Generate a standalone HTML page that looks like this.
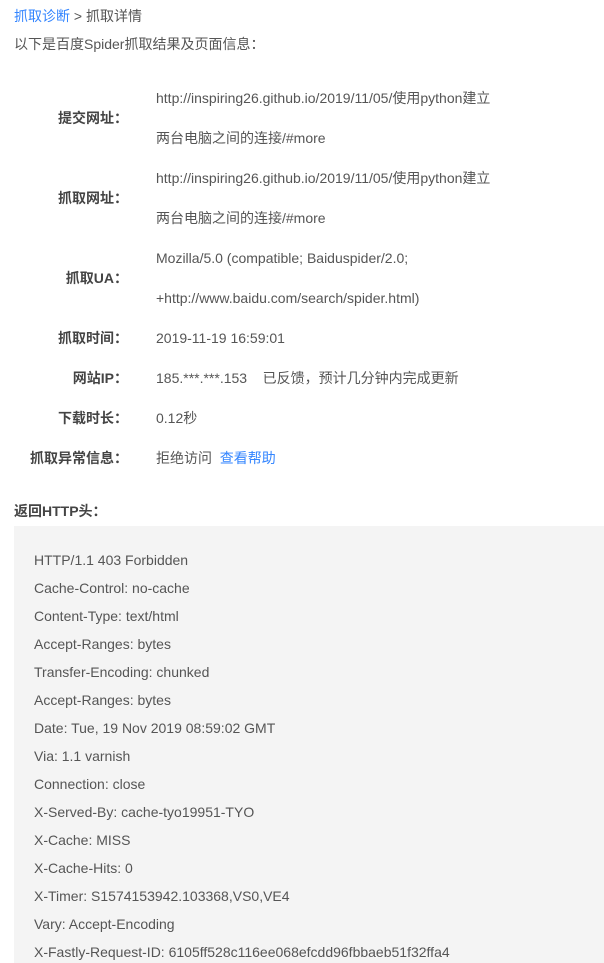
<html><head><style>
body{margin:0;background:#fff;font-family:"Liberation Sans","WenQuanYi Zen Hei","Noto Sans CJK SC",sans-serif;font-size:14px;color:#555;}
.a{position:absolute;white-space:nowrap;line-height:20px}
.l{position:absolute;width:128px;left:0;text-align:right;font-weight:bold;color:#444;line-height:20px}
.v{position:absolute;left:156px;line-height:40px;white-space:nowrap}
a{color:#3385ff;text-decoration:none}
.box{position:absolute;left:14px;top:526px;width:590px;height:437px;background:#f4f4f4}
.box div{position:absolute;left:20px;line-height:20px;white-space:nowrap}
</style></head><body>
<div class="a" style="left:14px;top:6px"><a>抓取诊断</a> &gt; 抓取详情</div>
<div class="a" style="left:14px;top:34px">以下是百度Spider抓取结果及页面信息：</div>
<div class="l" style="top:108px">提交网址：</div>
<div class="v" style="top:78px">http://inspiring26.github.io/2019/11/05/使用python建立<br>两台电脑之间的连接/#more</div>
<div class="l" style="top:188px">抓取网址：</div>
<div class="v" style="top:158px">http://inspiring26.github.io/2019/11/05/使用python建立<br>两台电脑之间的连接/#more</div>
<div class="l" style="top:268px">抓取UA：</div>
<div class="v" style="top:238px">Mozilla/5.0 (compatible; Baiduspider/2.0;<br>+http://www.baidu.com/search/spider.html)</div>
<div class="l" style="top:328px">抓取时间：</div>
<div class="v" style="top:318px">2019-11-19 16:59:01</div>
<div class="l" style="top:368px">网站IP：</div>
<div class="v" style="top:358px">185.***.***.153&nbsp;&nbsp;&nbsp; 已反馈，预计几分钟内完成更新</div>
<div class="l" style="top:408px">下载时长：</div>
<div class="v" style="top:398px">0.12秒</div>
<div class="l" style="top:448px">抓取异常信息：</div>
<div class="v" style="top:438px">拒绝访问&nbsp; <a>查看帮助</a></div>
<div class="a" style="left:14px;top:501px;font-weight:bold;color:#444">返回HTTP头：</div>
<div class="box">
<div style="top:24px">HTTP/1.1 403 Forbidden</div>
<div style="top:52px">Cache-Control: no-cache</div>
<div style="top:80px">Content-Type: text/html</div>
<div style="top:108px">Accept-Ranges: bytes</div>
<div style="top:136px">Transfer-Encoding: chunked</div>
<div style="top:164px">Accept-Ranges: bytes</div>
<div style="top:192px">Date: Tue, 19 Nov 2019 08:59:02 GMT</div>
<div style="top:220px">Via: 1.1 varnish</div>
<div style="top:248px">Connection: close</div>
<div style="top:276px">X-Served-By: cache-tyo19951-TYO</div>
<div style="top:304px">X-Cache: MISS</div>
<div style="top:332px">X-Cache-Hits: 0</div>
<div style="top:360px">X-Timer: S1574153942.103368,VS0,VE4</div>
<div style="top:388px">Vary: Accept-Encoding</div>
<div style="top:416px">X-Fastly-Request-ID: 6105ff528c116ee068efcdd96fbbaeb51f32ffa4</div>
</div>
</body></html>
